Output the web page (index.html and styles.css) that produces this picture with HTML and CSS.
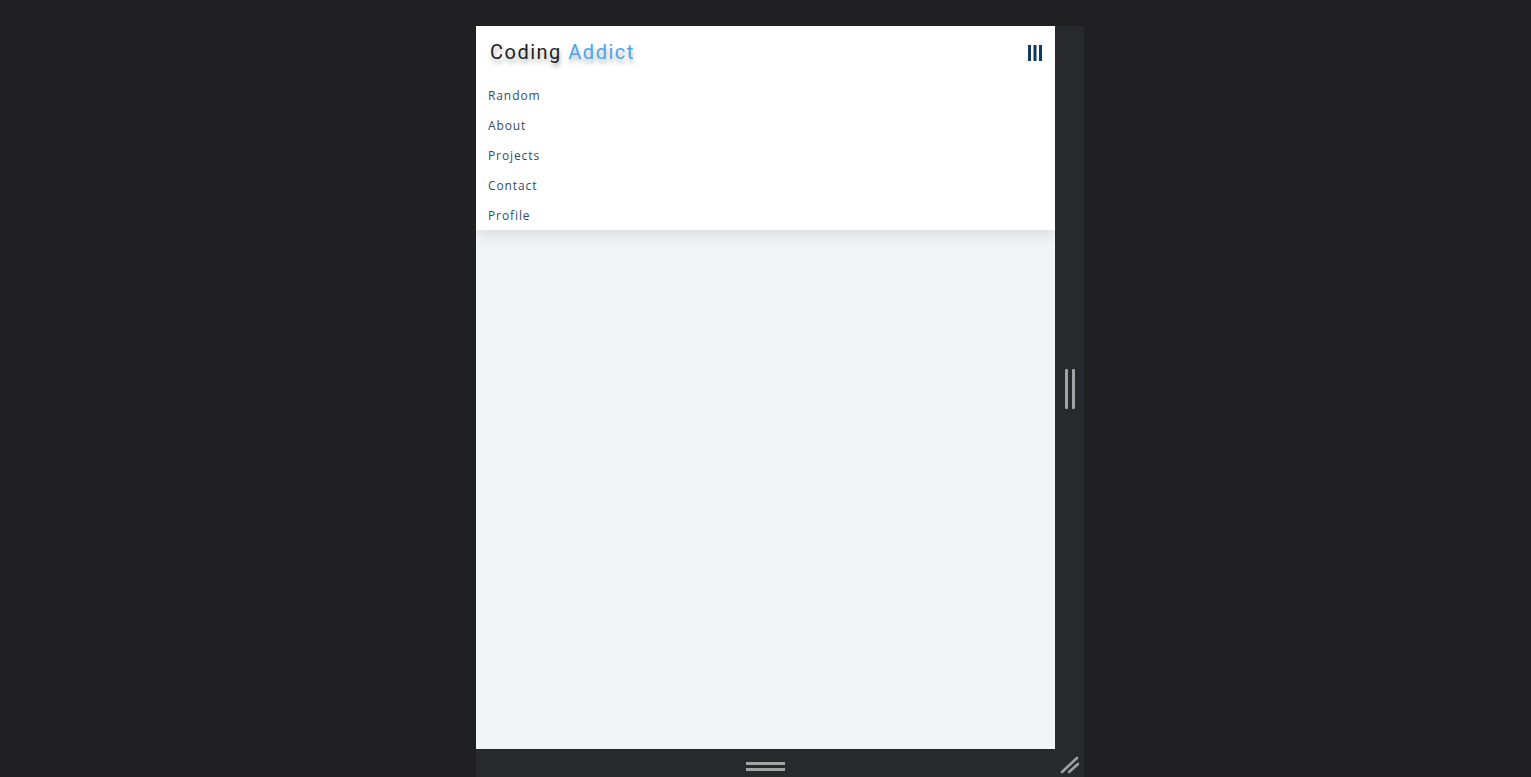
FILE: index.html
```html
<!DOCTYPE html>
<html lang="en">
<head>
<meta charset="utf-8">
<title>Coding Addict</title>
<link rel="stylesheet" href="styles.css">
</head>
<body>
<div class="stage">
  <div class="device">
    <div class="row">
      <div class="frame">
        <nav class="nav">
          <div class="nav-header">
            <h1 class="logo">Coding <span class="accent">Addict</span></h1>
            <button class="toggle" aria-label="menu">
              <svg width="14" height="16" viewBox="0 0 14 16"><rect x="0" y="0" width="3" height="16" fill="#0e3b5e"/><rect x="5.5" y="0" width="3" height="16" fill="#0e3b5e"/><rect x="11" y="0" width="3" height="16" fill="#0e3b5e"/></svg>
            </button>
          </div>
          <ul class="links">
            <li><a href="#">Random</a></li>
            <li><a href="#">About</a></li>
            <li><a href="#">Projects</a></li>
            <li><a href="#">Contact</a></li>
            <li><a href="#">Profile</a></li>
          </ul>
        </nav>
      </div>
      <div class="side-handle">
        <span class="vbar"></span><span class="vbar"></span>
      </div>
    </div>
    <div class="bottom">
      <div class="bottom-main">
        <span class="hbar"></span><span class="hbar"></span>
      </div>
      <div class="corner">
        <svg width="22" height="20" viewBox="0 0 22 20"><line x1="3" y1="17" x2="18" y2="3" stroke="#a0a0a0" stroke-width="2.6" stroke-linecap="round"/><line x1="10" y1="17" x2="19" y2="9" stroke="#a0a0a0" stroke-width="2.6" stroke-linecap="round"/></svg>
      </div>
    </div>
  </div>
</div>
</body>
</html>
```

FILE: styles.css
```css
* { box-sizing: border-box; }
html, body { margin: 0; padding: 0; }
body {
  background: #202023;
  height: 777px;
  overflow: hidden;
}
.stage {
  padding-top: 26px;
  padding-left: 476px;
}
.device {
  width: 608px;
  height: 751px;
  background: #27292d;
  display: flex;
  flex-direction: column;
}
.row {
  display: flex;
  height: 723px;
}
.frame {
  width: 579px;
  height: 723px;
  background: #f1f5f8;
  overflow: hidden;
}
.nav {
  background: #fff;
  box-shadow: 0 5px 15px rgba(0,0,0,0.1);
}
.nav-header {
  height: 54px;
  display: flex;
  align-items: center;
  justify-content: space-between;
  padding: 0 13px 0 14px;
}
.logo {
  margin: 0 0 2px 0;
  font-family: Roboto, "Liberation Sans", sans-serif;
  font-weight: 400;
  font-size: 20px;
  letter-spacing: 1.5px;
  color: #222;
  text-shadow: 1px 4px 4px rgba(0,0,0,0.3);
}
.logo .accent { color: #49a6e9; }
.toggle {
  border: 0;
  background: transparent;
  padding: 0;
  display: flex;
}
.links {
  list-style: none;
  margin: 0;
  padding: 0;
}
.links li { height: 30px; display: flex; align-items: center; }
.links a {
  font-family: "Open Sans", "Noto Sans", sans-serif;
  font-size: 12px;
  letter-spacing: 0.9px;
  color: #324d67;
  text-decoration: none;
  padding-left: 12px;
  padding-top: 1px;
}
.side-handle {
  width: 29px;
  display: flex;
  align-items: center;
  justify-content: center;
  gap: 4px;
  padding-top: 2px;
}
.vbar {
  width: 3px;
  height: 40px;
  background: #a3a3a3;
  border-radius: 1px;
}
.bottom {
  height: 28px;
  display: flex;
}
.bottom-main {
  width: 579px;
  display: flex;
  flex-direction: column;
  align-items: center;
  justify-content: center;
  gap: 3px;
  padding-top: 7px;
}
.hbar {
  width: 39px;
  height: 3px;
  background: #a3a3a3;
}
.corner {
  width: 29px;
  display: flex;
  align-items: flex-end;
  justify-content: center;
  padding-bottom: 2px;
}
```
